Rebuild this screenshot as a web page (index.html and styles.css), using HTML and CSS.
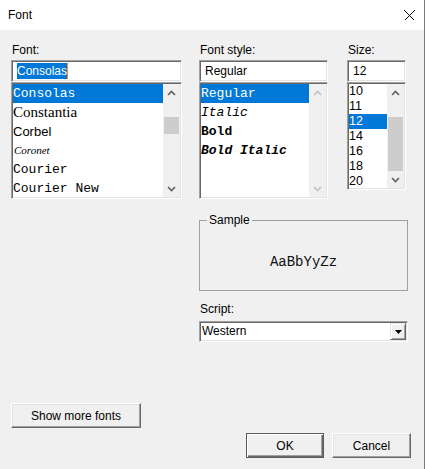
FILE: index.html
```html
<!DOCTYPE html>
<html>
<head>
<meta charset="utf-8">
<title>Font</title>
<link rel="stylesheet" href="styles.css">
</head>
<body>
<div class="window">
  <div class="titlebar">
    <span class="title">Font</span>
    <svg class="close" width="11" height="11" viewBox="0 0 11 11"><path d="M0.5 0.5 L10.5 10.5 M10.5 0.5 L0.5 10.5" stroke="#000" stroke-width="1" fill="none"/></svg>
  </div>
  <div class="content">
    <div class="pickers">
      <div class="picker">
        <span class="lbl">Font:</span>
        <div class="edit"><span class="sel">Consolas</span><span class="caret"></span></div>
        <div class="list list-tall">
          <ul class="items">
            <li class="item mono selected">Consolas</li>
            <li class="item f-constantia">Constantia</li>
            <li class="item f-corbel">Corbel</li>
            <li class="item f-coronet">Coronet</li>
            <li class="item mono">Courier</li>
            <li class="item mono">Courier New</li>
          </ul>
          <div class="scrollbar">
            <div class="sb-btn"><svg width="9" height="6" viewBox="0 0 9 6"><path d="M1 5 L4.5 1.5 L8 5" /></svg></div>
            <div class="sb-track"><div class="sb-thumb" style="margin-top:16px;height:17px"></div></div>
            <div class="sb-btn"><svg width="9" height="6" viewBox="0 0 9 6"><path d="M1 1 L4.5 4.5 L8 1" /></svg></div>
          </div>
        </div>
      </div>
      <div class="picker">
        <span class="lbl">Font style:</span>
        <div class="edit">Regular</div>
        <div class="list list-tall">
          <ul class="items">
            <li class="item mono selected">Regular</li>
            <li class="item mono italic">Italic</li>
            <li class="item mono bold">Bold</li>
            <li class="item mono bold italic">Bold Italic</li>
          </ul>
          <div class="scrollbar disabled">
            <div class="sb-btn"><svg width="9" height="6" viewBox="0 0 9 6"><path d="M1 5 L4.5 1.5 L8 5" /></svg></div>
            <div class="sb-track"></div>
            <div class="sb-btn"><svg width="9" height="6" viewBox="0 0 9 6"><path d="M1 1 L4.5 4.5 L8 1" /></svg></div>
          </div>
        </div>
      </div>
      <div class="picker picker-size">
        <span class="lbl">Size:</span>
        <div class="edit">12</div>
        <div class="list list-short">
          <ul class="items">
            <li class="item size">10</li>
            <li class="item size">11</li>
            <li class="item size selected">12</li>
            <li class="item size">14</li>
            <li class="item size">16</li>
            <li class="item size">18</li>
            <li class="item size">20</li>
          </ul>
          <div class="scrollbar">
            <div class="sb-btn"><svg width="9" height="6" viewBox="0 0 9 6"><path d="M1 5 L4.5 1.5 L8 5" /></svg></div>
            <div class="sb-track"><div class="sb-thumb" style="margin-top:16px;height:54px"></div></div>
            <div class="sb-btn"><svg width="9" height="6" viewBox="0 0 9 6"><path d="M1 1 L4.5 4.5 L8 1" /></svg></div>
          </div>
        </div>
      </div>
    </div>

    <div class="details">
      <fieldset class="sample">
        <legend>Sample</legend>
        <div class="sample-text">AaBbYyZz</div>
      </fieldset>
      <span class="lbl lbl-script">Script:</span>
      <div class="combo">
        <span class="combo-value">Western</span>
        <span class="combo-btn"><svg width="7" height="4" viewBox="0 0 7 4"><path d="M0 0 H7 L3.5 4 Z" fill="#000"/></svg></span>
      </div>
    </div>

    <button class="btn btn-more">Show more fonts</button>

    <div class="actions">
      <button class="btn btn-ok">OK</button>
      <button class="btn btn-cancel">Cancel</button>
    </div>
  </div>
</div>
</body>
</html>
```

FILE: styles.css
```css
* {
  box-sizing: border-box;
}

html, body {
  margin: 0;
  padding: 0;
}

body {
  font-family: "Liberation Sans", Arial, sans-serif;
  font-size: 12px;
  color: #000;
  background: #f0f0f0;
}

.window {
  width: 425px;
  height: 469px;
  background: #f0f0f0;
  border-right: 1px solid #7a7a7a;
  display: flex;
  flex-direction: column;
  overflow: hidden;
}

.titlebar {
  height: 30px;
  flex: none;
  background: #fff;
  display: flex;
  align-items: center;
  justify-content: space-between;
  padding: 0 9px 0 8px;
}

.title {
  line-height: 15px;
}

.close {
  display: block;
  shape-rendering: crispEdges;
}

.content {
  flex: 1;
  padding: 13px 13px 0 11px;
  display: flex;
  flex-direction: column;
}

.pickers {
  display: grid;
  grid-template-columns: 171px 129px 61px;
  column-gap: 17px;
  align-items: start;
}

.picker {
  display: flex;
  flex-direction: column;
}

.picker-size {
  margin-left: 2px;
}

.lbl {
  display: block;
  height: 15px;
  line-height: 15px;
  padding-left: 1px;
  margin-bottom: 2px;
}

.edit {
  height: 22px;
  background: #fff;
  border: 1px solid;
  border-color: #a0a0a0 #fff #fff #a0a0a0;
  box-shadow: inset 1px 1px 0 #696969, inset -1px -1px 0 #e3e3e3;
  padding: 0 3px 0 5px;
  display: flex;
  align-items: center;
  line-height: 15px;
  white-space: nowrap;
}

.sel {
  background: #0078d7;
  color: #fff;
  line-height: 16px;
}

.caret {
  display: inline-block;
  width: 1px;
  height: 16px;
  background: rgb(255, 135, 40);
}

.list {
  background: #fff;
  border: 1px solid;
  border-color: #a0a0a0 #fff #fff #a0a0a0;
  box-shadow: inset 1px 1px 0 #696969, inset -1px -1px 0 #e3e3e3;
  padding: 1px;
  display: flex;
  overflow: hidden;
}

.list-tall {
  height: 117px;
}

.list-short {
  height: 108px;
}

.items {
  flex: 1;
  min-width: 0;
  margin: 0;
  padding: 0;
  list-style: none;
  overflow: hidden;
}

.item {
  height: 19px;
  line-height: 19px;
  white-space: nowrap;
  font-size: 13px;
}

.item.selected {
  background: #0078d7;
  color: #fff;
}

.mono {
  font-family: "Liberation Mono", "Courier New", monospace;
  font-size: 13px;
}

.italic {
  font-style: italic;
}

.bold {
  font-weight: bold;
}

.f-constantia {
  font-family: "Liberation Serif", "Times New Roman", serif;
  font-size: 15px;
}

.f-corbel {
  font-family: "Liberation Sans", Arial, sans-serif;
  font-size: 13px;
}

.f-coronet {
  font-family: "Liberation Serif", "Times New Roman", serif;
  font-style: italic;
  font-size: 11px;
  padding-left: 1px;
}

.item.size {
  height: 15px;
  line-height: 15px;
  font-size: 12.5px;
  font-family: "Liberation Sans", Arial, sans-serif;
}

.scrollbar {
  width: 17px;
  flex: none;
  background: #f0f0f0;
  display: flex;
  flex-direction: column;
}

.sb-btn {
  height: 17px;
  flex: none;
  display: flex;
  align-items: center;
  justify-content: center;
}

.sb-btn svg path {
  fill: none;
  stroke: #606060;
  stroke-width: 1.6;
}

.scrollbar.disabled .sb-btn svg path {
  stroke: #c0c0c0;
}

.sb-track {
  flex: 1;
  padding: 0 1px;
}

.sb-thumb {
  background: #cdcdcd;
}

.details {
  margin-left: 188px;
  width: 209px;
  display: flex;
  flex-direction: column;
}

.sample {
  margin: 14px 0 0 0;
  padding: 0;
  border: 1px solid #a0a0a0;
  min-inline-size: 0;
}

.sample legend {
  margin-left: 7px;
  padding: 0 2px;
  line-height: 14px;
}

.sample-text {
  height: 63px;
  padding-top: 7px;
  display: flex;
  align-items: center;
  justify-content: center;
  font-family: "Liberation Mono", "Courier New", monospace;
  font-size: 14px;
  color: #111;
}

.lbl-script {
  margin-top: 11px;
  margin-bottom: 4px;
}

.combo {
  height: 21px;
  background: #fff;
  border: 1px solid;
  border-color: #a0a0a0 #fff #fff #a0a0a0;
  box-shadow: inset 1px 1px 0 #696969, inset -1px -1px 0 #e3e3e3;
  padding: 1px;
  display: flex;
  align-items: stretch;
}

.combo-value {
  flex: 1;
  padding-left: 1px;
  line-height: 17px;
}

.combo-btn {
  width: 16px;
  flex: none;
  background: #f0f0f0;
  border: 1px solid;
  border-color: #e3e3e3 #696969 #696969 #e3e3e3;
  box-shadow: inset 1px 1px 0 #fff, inset -1px -1px 0 #a0a0a0;
  display: flex;
  align-items: center;
  justify-content: center;
}

.combo-btn svg {
  display: block;
}

.btn {
  height: 25px;
  background: #f0f0f0;
  border: 1px solid;
  border-color: #fff #696969 #696969 #fff;
  box-shadow: inset -1px -1px 0 #a0a0a0, inset 1px 1px 0 #e3e3e3;
  font-family: "Liberation Sans", Arial, sans-serif;
  font-size: 12px;
  color: #000;
  padding: 0;
  margin: 0;
}

.btn-more {
  width: 130px;
  margin-top: 61px;
  align-self: flex-start;
}

.actions {
  display: flex;
  justify-content: flex-end;
  gap: 8px;
  margin-top: 5px;
}

.btn-ok {
  width: 78px;
  border: 1px solid #5a5a5a;
  box-shadow: inset 1px 1px 0 #fff, inset -1px -1px 0 #696969, inset -2px -2px 0 #a0a0a0;
}

.btn-cancel {
  width: 79px;
}
```
